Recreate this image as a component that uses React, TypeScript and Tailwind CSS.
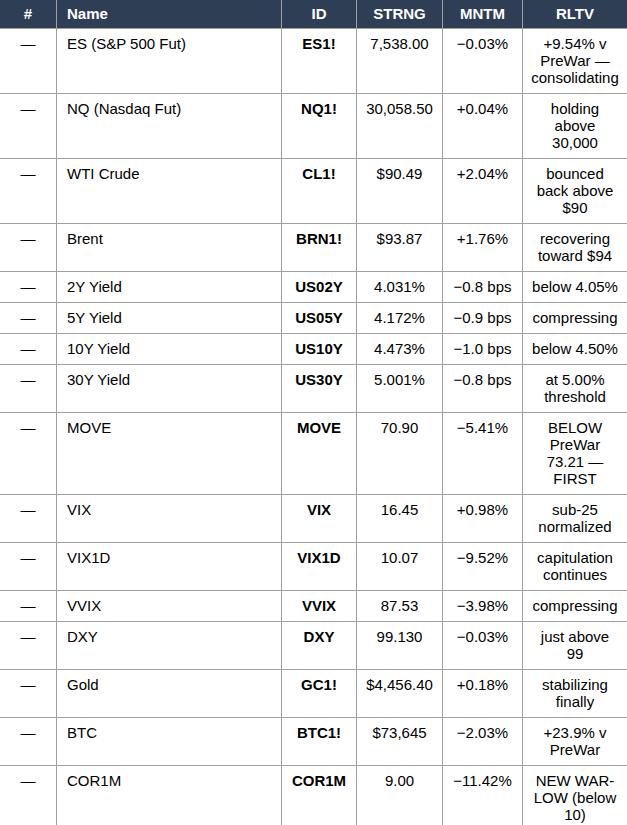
const rows: { id: string; name: string; strng: string; mntm: string; rltv: string[] }[] = [
  { name: 'ES (S&P 500 Fut)', id: 'ES1!', strng: '7,538.00', mntm: '\u22120.03%', rltv: ['+9.54% v', 'PreWar \u2014', 'consolidating'] },
  { name: 'NQ (Nasdaq Fut)', id: 'NQ1!', strng: '30,058.50', mntm: '+0.04%', rltv: ['holding', 'above', '30,000'] },
  { name: 'WTI Crude', id: 'CL1!', strng: '$90.49', mntm: '+2.04%', rltv: ['bounced', 'back above', '$90'] },
  { name: 'Brent', id: 'BRN1!', strng: '$93.87', mntm: '+1.76%', rltv: ['recovering', 'toward $94'] },
  { name: '2Y Yield', id: 'US02Y', strng: '4.031%', mntm: '\u22120.8 bps', rltv: ['below 4.05%'] },
  { name: '5Y Yield', id: 'US05Y', strng: '4.172%', mntm: '\u22120.9 bps', rltv: ['compressing'] },
  { name: '10Y Yield', id: 'US10Y', strng: '4.473%', mntm: '\u22121.0 bps', rltv: ['below 4.50%'] },
  { name: '30Y Yield', id: 'US30Y', strng: '5.001%', mntm: '\u22120.8 bps', rltv: ['at 5.00%', 'threshold'] },
  { name: 'MOVE', id: 'MOVE', strng: '70.90', mntm: '\u22125.41%', rltv: ['BELOW', 'PreWar', '73.21 \u2014', 'FIRST'] },
  { name: 'VIX', id: 'VIX', strng: '16.45', mntm: '+0.98%', rltv: ['sub-25', 'normalized'] },
  { name: 'VIX1D', id: 'VIX1D', strng: '10.07', mntm: '\u22129.52%', rltv: ['capitulation', 'continues'] },
  { name: 'VVIX', id: 'VVIX', strng: '87.53', mntm: '\u22123.98%', rltv: ['compressing'] },
  { name: 'DXY', id: 'DXY', strng: '99.130', mntm: '\u22120.03%', rltv: ['just above', '99'] },
  { name: 'Gold', id: 'GC1!', strng: '$4,456.40', mntm: '+0.18%', rltv: ['stabilizing', 'finally'] },
  { name: 'BTC', id: 'BTC1!', strng: '$73,645', mntm: '\u22122.03%', rltv: ['+23.9% v', 'PreWar'] },
  { name: 'COR1M', id: 'COR1M', strng: '9.00', mntm: '\u221211.42%', rltv: ['NEW WAR-', 'LOW (below', '10)'] },
];

const App = () => {
  const head = 'bg-[#2d3e55] text-white font-bold text-center pt-[5px] pb-[6px] border-b border-[#a0a0a0]';
  const cell = 'pt-[6px] pb-[7px] border-b border-[#a0a0a0] whitespace-nowrap';

  return (
    <div className="min-h-screen bg-white font-['Liberation_Sans',Arial,sans-serif] text-[15px] leading-[17px] text-black">
      <div className="grid w-[627px] grid-cols-[57px_225px_75px_86px_80px_104px] overflow-hidden">
        {/* Header */}
        <div className={`${head} border-r`}>#</div>
        <div className={`${head} border-r text-left! pl-[10px]`}>Name</div>
        <div className={`${head} border-r`}>ID</div>
        <div className={`${head} border-r`}>STRNG</div>
        <div className={`${head} border-r`}>MNTM</div>
        <div className={head}>RLTV</div>

        {/* Rows */}
        {rows.map((r) => (
          <div key={r.id} className="contents">
            <div className={`${cell} border-r text-center`}>—</div>
            <div className={`${cell} border-r pl-[10px]`}>{r.name}</div>
            <div className={`${cell} border-r text-center font-bold`}>{r.id}</div>
            <div className={`${cell} border-r text-center`}>{r.strng}</div>
            <div className={`${cell} border-r text-center`}>{r.mntm}</div>
            <div className={`${cell} text-center`}>
              {r.rltv.map((line, i) => (
                <div key={i}>{line}</div>
              ))}
            </div>
          </div>
        ))}
      </div>
    </div>
  );
};

export default App;
